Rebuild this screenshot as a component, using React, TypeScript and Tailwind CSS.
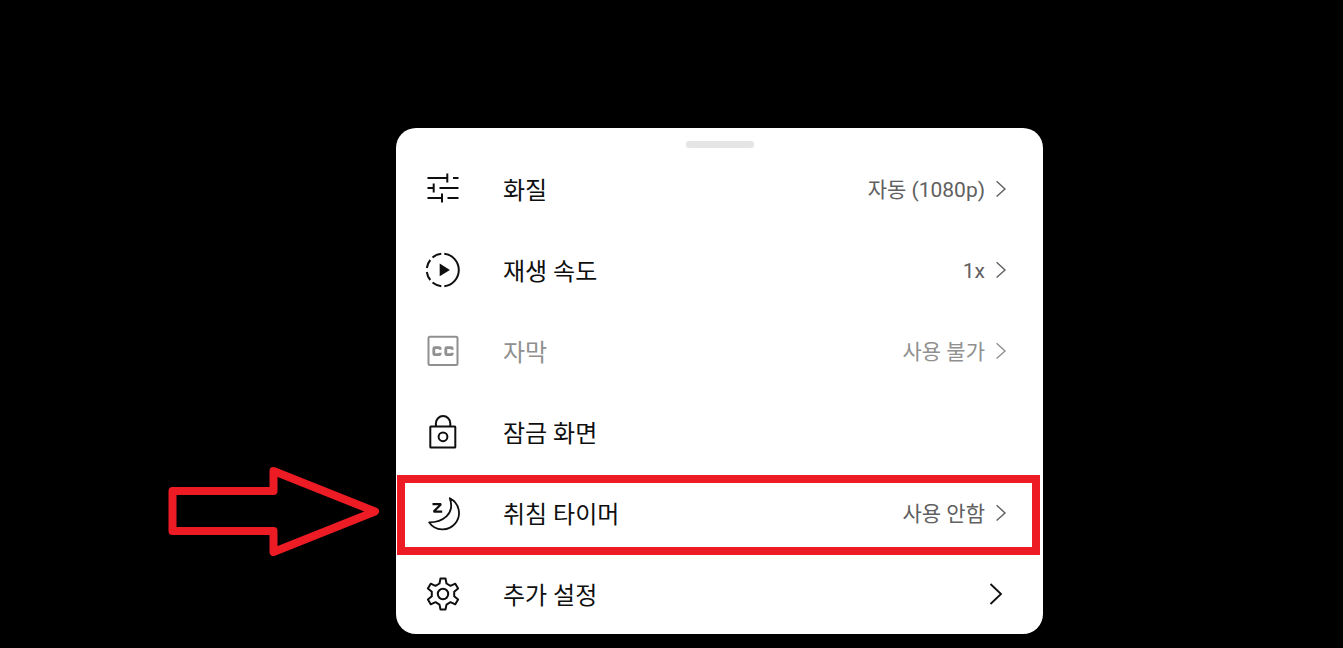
import type { ReactNode } from 'react'
import clsx from 'clsx'

interface MenuItem {
  id: string
  label: string
  value?: string
  icon: ReactNode
  disabled?: boolean
  highlighted?: boolean
  submenu?: boolean
}

function Icon({ children }: { children: ReactNode }) {
  return (
    <svg
      viewBox="0 0 37 37"
      className="size-[37px] shrink-0"
      fill="none"
      stroke="currentColor"
      strokeWidth="2"
      aria-hidden="true"
    >
      {children}
    </svg>
  )
}

const items: MenuItem[] = [
  {
    id: 'quality',
    label: '화질',
    value: '자동 (1080p)',
    icon: (
      <Icon>
        <path d="M2.5 8H22M28 8h5.5M2.5 18H8.5M14.5 18h19M2.5 28H17M22.5 28h11" />
        <path d="M22.3 3.5v9M8.7 13.5v9M17 23.5v9" />
      </Icon>
    ),
  },
  {
    id: 'speed',
    label: '재생 속도',
    value: '1x',
    icon: (
      <Icon>
        <path d="M19.3 2.8a16.3 16.3 0 0 1 0 32.4" />
        <path d="M7.5 6.4a16.3 16.3 0 0 1 8.8-3.6M1.8 17a16.3 16.3 0 0 1 3.5-8M1.8 21a16.3 16.3 0 0 0 3.5 8M7.5 31.6a16.3 16.3 0 0 0 8.8 3.6" />
        <path d="M14.7 12.6v12.6l10.2-6.3z" fill="currentColor" stroke="none" />
      </Icon>
    ),
  },
  {
    id: 'captions',
    label: '자막',
    value: '사용 불가',
    disabled: true,
    icon: (
      <Icon>
        <rect x="3.5" y="4.7" width="29" height="28.3" rx="1.5" />
        <path
          strokeWidth="2.8"
          d="M15.2 17.7v-1q0-1-1-1H9.8q-1 0-1 1v5q0 1 1 1h4.4q1 0 1-1v-1M27.2 17.7v-1q0-1-1-1h-4.4q-1 0-1 1v5q0 1 1 1h4.4q1 0 1-1v-1"
        />
      </Icon>
    ),
  },
  {
    id: 'lock',
    label: '잠금 화면',
    icon: (
      <Icon>
        <rect x="5.3" y="13.6" width="25" height="20.8" rx="0.5" />
        <path d="M10.9 13.5v-3.2a7.2 7.2 0 0 1 14.4 0v3.2" />
        <circle cx="18" cy="23.8" r="4.4" />
      </Icon>
    ),
  },
  {
    id: 'sleep',
    label: '취침 타이머',
    value: '사용 안함',
    highlighted: true,
    icon: (
      <Icon>
        <path
          strokeWidth="1.8"
          strokeLinejoin="round"
          d="M24.8 4.2A16.4 16.4 0 1 1 4.2 28.4C17 28.2 30.5 20.5 24.8 4.2z"
        />
        <path strokeWidth="2.2" strokeLinejoin="bevel" d="M7.500 10.200h8.500L8.700 17.600h8.500" />
      </Icon>
    ),
  },
  {
    id: 'more',
    label: '추가 설정',
    submenu: true,
    icon: (
      <Icon>
        <path
          strokeLinejoin="round"
          d="M15.5 3.5h5l1 5 4 2.3 4.8-2.1 2.8 4.8-3.9 3.3v4.4l3.9 3.3-2.8 4.8-4.8-2.1-4 2.4-1 4.9h-5l-1-4.9-4-2.4-4.8 2.1-2.8-4.8 3.9-3.3v-4.4l-3.9-3.3 2.8-4.8 4.8 2.1 4-2.3z"
        />
        <circle cx="18" cy="19" r="5.2" />
      </Icon>
    ),
  },
]

function Chevron() {
  return (
    <svg
      viewBox="0 0 12 18"
      className="h-[18px] w-3 shrink-0"
      fill="none"
      stroke="currentColor"
      strokeWidth="1.4"
      aria-hidden="true"
    >
      <path d="M1.6 1.2 10 8.9 1.6 16.6" />
    </svg>
  )
}

function ChevronLarge() {
  return (
    <svg
      viewBox="0 0 18 24"
      className="h-6 w-[18px] shrink-0"
      fill="none"
      stroke="currentColor"
      strokeWidth="1.8"
      aria-hidden="true"
    >
      <path d="M1.5 2 12 12 1.5 22" />
    </svg>
  )
}

// red frame and arrow pointing at the highlighted row
function Callout() {
  return (
    <>
      <span className="pointer-events-none absolute top-[3px] right-[3px] -bottom-0.5 left-px border-8 border-[#ed1c24]" />
      <svg
        viewBox="0 0 211 89"
        className="pointer-events-none absolute -top-[5px] right-full mr-[17px] h-[89px] w-[211px]"
        fill="none"
        stroke="#ed1c24"
        strokeWidth="8"
        strokeLinejoin="round"
        aria-hidden="true"
      >
        <path d="M4.5 24h101V4L207 44.5 105.5 85V64H4.5z" />
      </svg>
    </>
  )
}

function MenuRow({ item }: { item: MenuItem }) {
  return (
    <li className="relative">
      <button
        type="button"
        disabled={item.disabled}
        className={clsx(
          'flex h-[81px] w-full items-center pr-9 pl-[29px] text-left',
          item.disabled ? 'text-[#909090]' : 'text-[#0f0f0f]',
        )}
      >
        {item.icon}
        <span className="ml-[41px] flex-1 pt-1 text-2xl leading-8">{item.label}</span>
        {item.value && (
          <span
            className={clsx(
              'flex items-center gap-2.5 text-[21px]',
              item.disabled ? 'text-[#909090]' : 'text-[#606060]',
            )}
          >
            <span className="pt-0.5 leading-8">{item.value}</span>
            <Chevron />
          </span>
        )}
        {item.submenu && <ChevronLarge />}
      </button>
      {item.highlighted && <Callout />}
    </li>
  )
}

export default function App() {
  return (
    <main className="flex min-h-screen items-start justify-center overflow-hidden bg-black pt-32 pl-24 font-[Roboto,'Noto_Sans_CJK_KR',sans-serif]">
      <section className="w-full max-w-[647px] rounded-[20px] bg-white pt-[13px]">
        <div className="mx-auto h-[7px] w-[68px] rounded-[3px] bg-[#e5e5e5]" />
        <ul>
          {items.map(item => (
            <MenuRow key={item.id} item={item} />
          ))}
        </ul>
      </section>
    </main>
  )
}
